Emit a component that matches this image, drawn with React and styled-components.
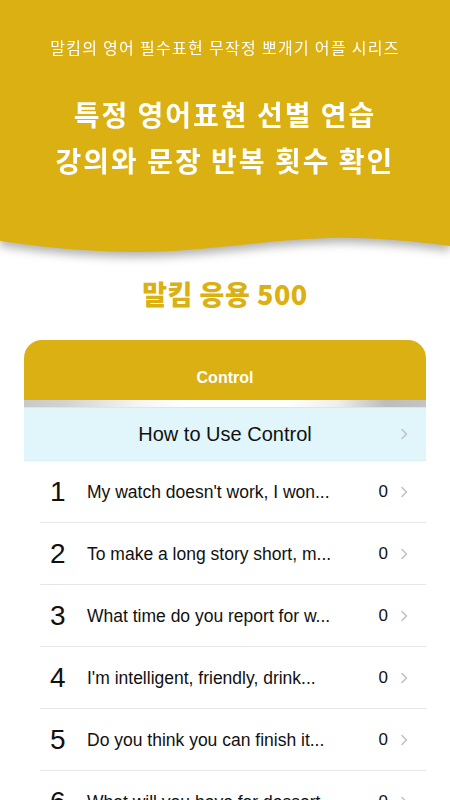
import React from 'react';
import styled, { createGlobalStyle } from 'styled-components';

const GOLD = '#DBB012';

const GlobalStyle = createGlobalStyle`
  body {
    margin: 0;
    background: #ffffff;
    font-family: "Liberation Sans", "Noto Sans CJK KR", sans-serif;
  }
`;

const Page = styled.div`
  width: 450px;
  overflow: hidden;
`;

const HeaderWrap = styled.div`
  filter: drop-shadow(0 5px 5px rgba(0, 0, 0, 0.3));
`;

const Header = styled.div`
  background: ${GOLD};
  height: 236px;
  padding-top: 36px;
  box-sizing: border-box;
  text-align: center;
  color: #ffffff;
  font-family: "Noto Sans CJK KR", sans-serif;
`;

const Wave = styled.svg`
  display: block;
  margin-top: -1px;
`;

const Subtitle = styled.div`
  font-size: 16px;
  line-height: 22px;
  font-weight: 400;
  letter-spacing: 1.3px;
`;

const Title = styled.h1`
  margin: 33px 0 0;
  font-size: 28px;
  line-height: 46px;
  font-weight: 700;
  letter-spacing: 2px;
`;

const AppName = styled.h2`
  margin: 12px 0 0;
  text-align: center;
  color: ${GOLD};
  font-family: "Noto Sans CJK KR", sans-serif;
  font-size: 27px;
  line-height: 34px;
  font-weight: 800;
  letter-spacing: 0.5px;
`;

const Card = styled.div`
  margin: 29px 24px 0;
  border-radius: 18px 18px 0 0;
  overflow: hidden;
`;

const CardHeader = styled.div`
  background: ${GOLD};
  height: 60px;
  padding-top: 28px;
  box-sizing: border-box;
  text-align: center;
  color: #ffffff;
  font-size: 16px;
  line-height: 20px;
  font-weight: 700;
`;

const Strip = styled.div`
  height: 8px;
  background: linear-gradient(
    90deg,
    #c9c9c9 0%,
    #d2d2d2 10%,
    #f4f4f4 28%,
    #ffffff 40%,
    #ffffff 65%,
    #eeeeee 78%,
    #bdbdbd 90%,
    #c4c4c4 100%
  );
  border-bottom: 1px solid #e4e4e4;
  box-sizing: border-box;
`;

const HowTo = styled.div`
  position: relative;
  height: 53px;
  background: #e0f6fb;
  border-bottom: 1px solid #d6eef4;
  box-sizing: border-box;
  display: flex;
  align-items: center;
  justify-content: center;
  font-size: 20px;
  color: #111;
`;

const HowToChevron = styled.span`
  position: absolute;
  right: 18px;
  top: 50%;
  transform: translateY(-50%);
  display: flex;
`;

const Row = styled.div`
  height: 62px;
  display: flex;
  align-items: center;
  padding: 0 18px 0 26px;
  position: relative;

  &::after {
    content: '';
    position: absolute;
    left: 16px;
    right: 0;
    bottom: 0;
    height: 1px;
    background: #e6e6e6;
  }
`;

const Num = styled.div`
  width: 37px;
  flex-shrink: 0;
  font-size: 28px;
  font-weight: 300;
  color: #111;
`;

const Sentence = styled.div`
  flex: 1;
  min-width: 0;
  font-size: 17.5px;
  color: #111;
  white-space: nowrap;
  overflow: hidden;
  text-overflow: ellipsis;
`;

const Count = styled.div`
  font-size: 17px;
  color: #111;
  margin-right: 13px;
`;

const Chevron = () => (
  <svg width="7" height="12" viewBox="0 0 7 12">
    <path d="M1 1.5 L5.5 6 L1 10.5" fill="none" stroke="#c2c2c6" strokeWidth="1.6" strokeLinecap="round" strokeLinejoin="round" />
  </svg>
);

const sentences = [
  "My watch doesn't work, I won...",
  'To make a long story short, m...',
  'What time do you report for w...',
  "I'm intelligent, friendly, drink...",
  'Do you think you can finish it...',
  'What will you have for dessert...',
  'How long does it take to get t...',
];

function App() {
  return (
    <Page>
      <GlobalStyle />
      <HeaderWrap>
        <Header>
          <Subtitle>말킴의 영어 필수표현 무작정 뽀개기 어플 시리즈</Subtitle>
          <Title>
            특정 영어표현 선별 연습
            <br />
            강의와 문장 반복 횟수 확인
          </Title>
        </Header>
        <Wave width="450" height="30" viewBox="0 0 450 30">
          <path
            d="M0 0 H450 V11 C410 6 370 2 330 3 C260 5 200 18 130 17 C75 16 35 11 0 6 Z"
            fill={GOLD}
          />
        </Wave>
      </HeaderWrap>
      <AppName>말킴 응용 500</AppName>
      <Card>
        <CardHeader>Control</CardHeader>
        <Strip />
        <HowTo>
          How to Use Control
          <HowToChevron>
            <Chevron />
          </HowToChevron>
        </HowTo>
        {sentences.map((s, i) => (
          <Row key={i}>
            <Num>{i + 1}</Num>
            <Sentence>{s}</Sentence>
            <Count>0</Count>
            <Chevron />
          </Row>
        ))}
      </Card>
    </Page>
  );
}

export default App;
